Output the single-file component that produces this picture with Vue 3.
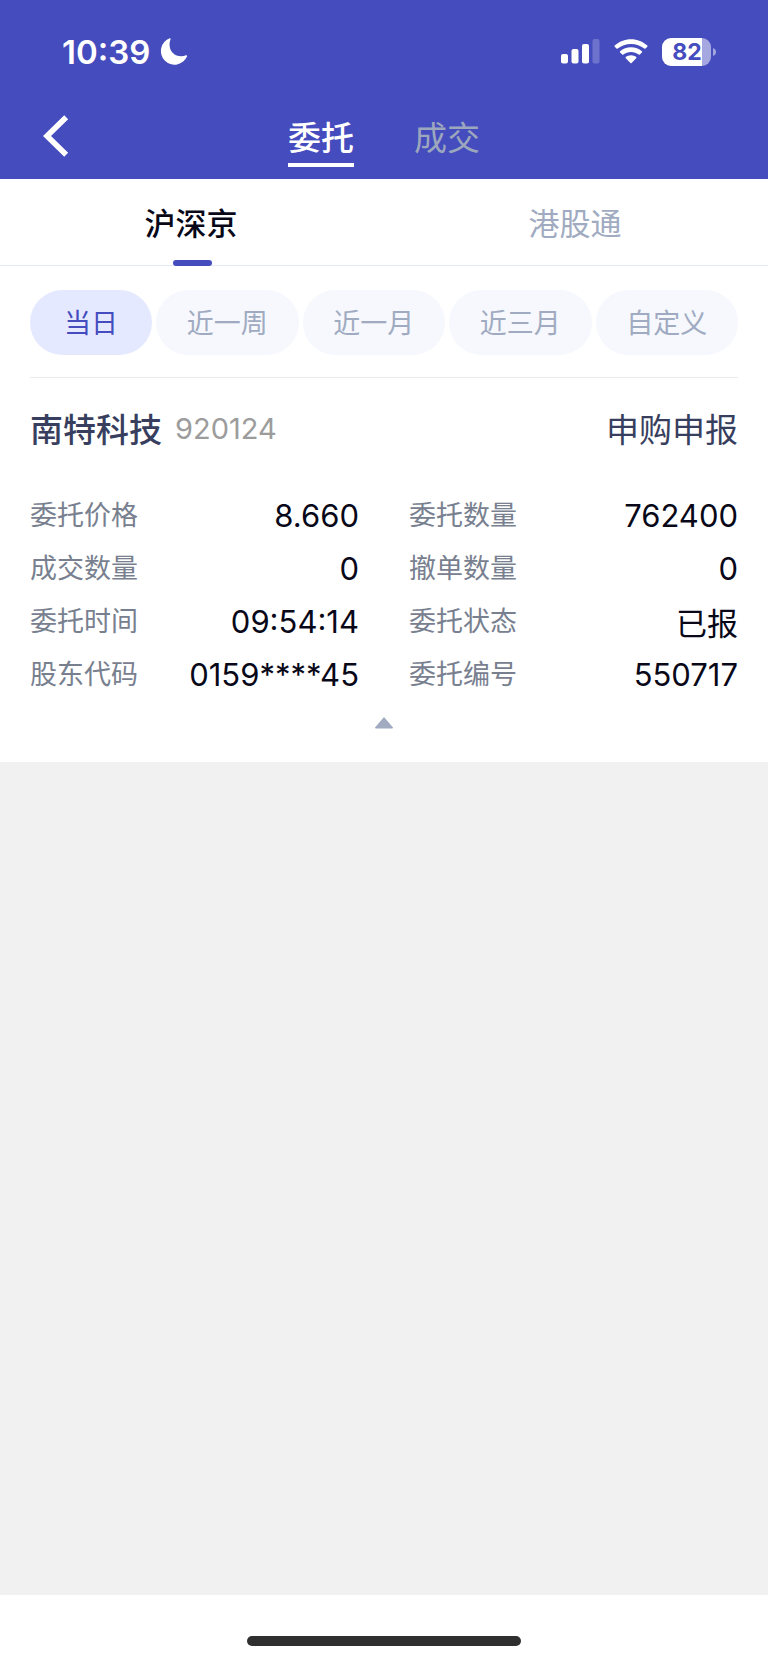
<script setup>
import { ref } from 'vue'

const views = ['委托', '成交']
const activeView = ref('委托')

const markets = ['沪深京', '港股通']
const activeMarket = ref('沪深京')

const ranges = ['当日', '近一周', '近一月', '近三月', '自定义']
const activeRange = ref('当日')

const order = {
  name: '南特科技',
  code: '920124',
  type: '申购申报',
  fields: [
    ['委托价格', '8.660'],
    ['委托数量', '762400'],
    ['成交数量', '0'],
    ['撤单数量', '0'],
    ['委托时间', '09:54:14'],
    ['委托状态', '已报'],
    ['股东代码', '0159****45'],
    ['委托编号', '550717'],
  ],
}
const expanded = ref(true)
</script>

<template>
  <div class="page">
    <header class="header">
      <div class="status">
        <div class="clock">
          <span>10:39</span>
          <svg width="28" height="28" viewBox="0 0 28 28" aria-hidden="true">
            <path d="M10.6 1.1C10.9.6 10.4.1 9.8.3A13.6 13.6 0 1 0 27.1 18.2C27.3 17.5 26.7 17 26.1 17.3C21.500 19.200 16.300 18.500 12.900 15.100C9.300 11.500 8.700 5.800 10.600 1.100Z" fill="currentColor" />
          </svg>
        </div>
        <div class="signals">
          <svg class="cell" width="39" height="25" viewBox="0 0 39 25" aria-hidden="true">
            <rect x="0" y="15" width="7" height="9.500" rx="2" fill="#fff" />
            <rect x="10.500" y="10" width="7" height="14.500" rx="2" fill="#fff" />
            <rect x="21" y="5" width="7" height="19.500" rx="2" fill="#fff" />
            <rect x="31.500" y="0" width="7" height="24.500" rx="2" fill="#fff" fill-opacity=".22" />
          </svg>
          <svg class="wifi" width="34" height="25" viewBox="0 0 34 25" aria-hidden="true">
            <g fill="#fff">
              <path d="M17 .3C23.300.3 29 2.700 33.300 6.600Q33.900 7.200 33.300 7.800L31.500 9.600Q30.900 10.100 30.300 9.600C26.700 6.500 22.100 4.900 17 4.900S7.300 6.500 3.700 9.600Q3.100 10.100 2.500 9.600L.7 7.800Q.1 7.200.7 6.600C5 2.700 10.700.3 17 .3Z" />
              <path d="M17 8.200C21.200 8.200 25 9.700 27.900 12.300Q28.500 12.900 27.900 13.500L25.800 15.500Q25.200 16 24.600 15.500C22.500 13.800 19.900 12.900 17 12.900S11.500 13.800 9.400 15.500Q8.800 16 8.200 15.500L6.100 13.500Q5.500 12.900 6.100 12.300C9 9.700 12.800 8.200 17 8.200Z" />
              <path d="M17 16.200C19.100 16.200 20.900 16.900 22.200 18Q22.800 18.600 22.200 19.200L17.600 23.900Q17 24.500 16.400 23.900L11.800 19.200Q11.200 18.600 11.800 18C13.100 16.900 14.900 16.200 17 16.200Z" />
            </g>
          </svg>
          <div class="battery">
            <span class="level">82</span>
            <svg width="3" height="8" viewBox="0 0 3 8" aria-hidden="true"><path d="M0 0Q3 1.200 3 4T0 8Z" fill="#fff" fill-opacity=".5" /></svg>
          </div>
        </div>
      </div>
      <nav class="nav">
        <button class="back" type="button" aria-label="返回">
          <svg width="26" height="42" viewBox="0 0 26 42" aria-hidden="true">
            <path d="M23.200 2.200L4 21L23.200 39.800" fill="none" stroke="#fff" stroke-width="5.600" />
          </svg>
        </button>
        <div class="views">
          <button
            v-for="view in views"
            :key="view"
            type="button"
            class="view"
            :class="{ active: view === activeView }"
            @click="activeView = view"
          >{{ view }}</button>
        </div>
      </nav>
    </header>

    <main class="content">
      <div class="markets">
        <button
          v-for="market in markets"
          :key="market"
          type="button"
          class="market"
          :class="{ active: market === activeMarket }"
          @click="activeMarket = market"
        >{{ market }}</button>
      </div>

      <div class="ranges">
        <button
          v-for="range in ranges"
          :key="range"
          type="button"
          class="range"
          :class="{ active: range === activeRange }"
          @click="activeRange = range"
        >{{ range }}</button>
      </div>

      <section class="order">
        <div class="summary">
          <h2 class="name">{{ order.name }}</h2>
          <span class="code">{{ order.code }}</span>
          <span class="type">{{ order.type }}</span>
        </div>
        <dl v-if="expanded" class="fields">
          <div v-for="[label, value] in order.fields" :key="label" class="field">
            <dt>{{ label }}</dt>
            <dd>{{ value }}</dd>
          </div>
        </dl>
        <button class="toggle" type="button" aria-label="收起" @click="expanded = !expanded">
          <svg width="18" height="12" viewBox="0 0 18 12" aria-hidden="true"><path d="M9 0L18 10.500Q18 11.500 17 11.500H1Q0 11.500 0 10.500Z" fill="#a0abc1" /></svg>
        </button>
      </section>
    </main>

    <footer class="home"><span class="home-bar"></span></footer>
  </div>
</template>

<style>
body {
  margin: 0;
}
</style>

<style scoped>
.page {
  display: flex;
  flex-direction: column;
  min-height: 100vh;
  background: #f1f1f1;
  font-family: Inter, "Noto Sans CJK SC", sans-serif;
  color: #080818;
}
button {
  margin: 0;
  padding: 0;
  border: 0;
  background: none;
  font: inherit;
  color: inherit;
  cursor: pointer;
}
svg {
  display: block;
}
.header {
  background: #454cbe;
  color: #fff;
}
.status {
  display: flex;
  align-items: center;
  justify-content: space-between;
  height: 103px;
  padding: 0 52px 0 62px;
}
.clock {
  display: flex;
  align-items: center;
  gap: 10px;
  font-size: 33px;
  font-weight: 600;
}
.signals {
  display: flex;
  align-items: center;
}
.cell {
  margin-right: 14px;
}
.wifi {
  margin-right: 14px;
}
.battery {
  display: flex;
  align-items: center;
  gap: 2px;
}
.level {
  box-sizing: border-box;
  width: 49px;
  height: 28px;
  padding-left: 1px;
  border-radius: 9px;
  background: linear-gradient(90deg, #fff 82%, #a5a8e0 82%);
  color: #454cbe;
  font-size: 23px;
  font-weight: 700;
  line-height: 28px;
  text-align: center;
}
.nav {
  display: grid;
  grid-template-columns: 1fr auto 1fr;
  align-items: start;
  padding: 8px 30px 12px;
}
.back {
  display: flex;
  align-items: center;
  justify-self: start;
  height: 50px;
  padding: 0 13px;
}
.views {
  display: flex;
  gap: 60px;
}
.view {
  padding-top: 2px;
  border-bottom: 4px solid transparent;
  color: #9ca7bd;
  font-size: 33px;
  line-height: 50px;
}
.view.active {
  border-bottom-color: #fff;
  color: #fff;
  font-weight: 500;
}
.content {
  background: #fff;
}
.markets {
  display: flex;
  border-bottom: 1px solid #e5e9f4;
}
.market {
  position: relative;
  flex: 1;
  height: 86px;
  padding: 0 2px 2px 0;
  color: #a0abc1;
  font-size: 31px;
}
.market.active {
  color: #080818;
  font-weight: 500;
}
.market.active::after {
  content: "";
  position: absolute;
  right: 0;
  bottom: -1px;
  left: 0;
  width: 39px;
  height: 6px;
  margin: 0 auto;
  border-radius: 3px;
  background: #454cbe;
}
.ranges {
  display: grid;
  grid-template-columns: 6fr repeat(4, 7fr);
  gap: 4px;
  margin: 0 30px;
  padding: 24px 0 22px;
  border-bottom: 1px solid #ebebeb;
}
.range {
  height: 65px;
  padding-bottom: 2px;
  border-radius: 33px;
  background: #f6f8fd;
  color: #a0abc1;
  font-size: 27px;
}
.range.active {
  background: #e5e9ff;
  color: #454cbe;
}
.order {
  padding: 0 30px;
}
.summary {
  display: flex;
  align-items: center;
  height: 100px;
  color: #383f5e;
  font-size: 33px;
}
.name {
  margin: 0 13px 0 0;
  font-size: 33px;
  font-weight: 500;
}
.code {
  color: #9c9c9c;
  font-size: 29px;
}
.type {
  margin-left: auto;
}
.fields {
  display: grid;
  grid-template-columns: 1fr 1fr;
  column-gap: 50px;
  margin: 0;
  padding: 10px 0 17px;
}
.field {
  display: flex;
  align-items: center;
  justify-content: space-between;
  height: 53px;
}
dt {
  padding-bottom: 3px;
  color: #78808f;
  font-size: 27px;
}
dd {
  margin: 0;
  padding-top: 2px;
  font-size: 31px;
}
.toggle {
  display: flex;
  justify-content: center;
  width: 100%;
  padding-bottom: 33px;
}
.home {
  display: flex;
  justify-content: center;
  align-items: flex-end;
  height: 68px;
  margin-top: auto;
  background: #fff;
}
.home-bar {
  width: 274px;
  height: 10px;
  margin-bottom: 17px;
  border-radius: 5px;
  background: #2f2f2f;
}
</style>
